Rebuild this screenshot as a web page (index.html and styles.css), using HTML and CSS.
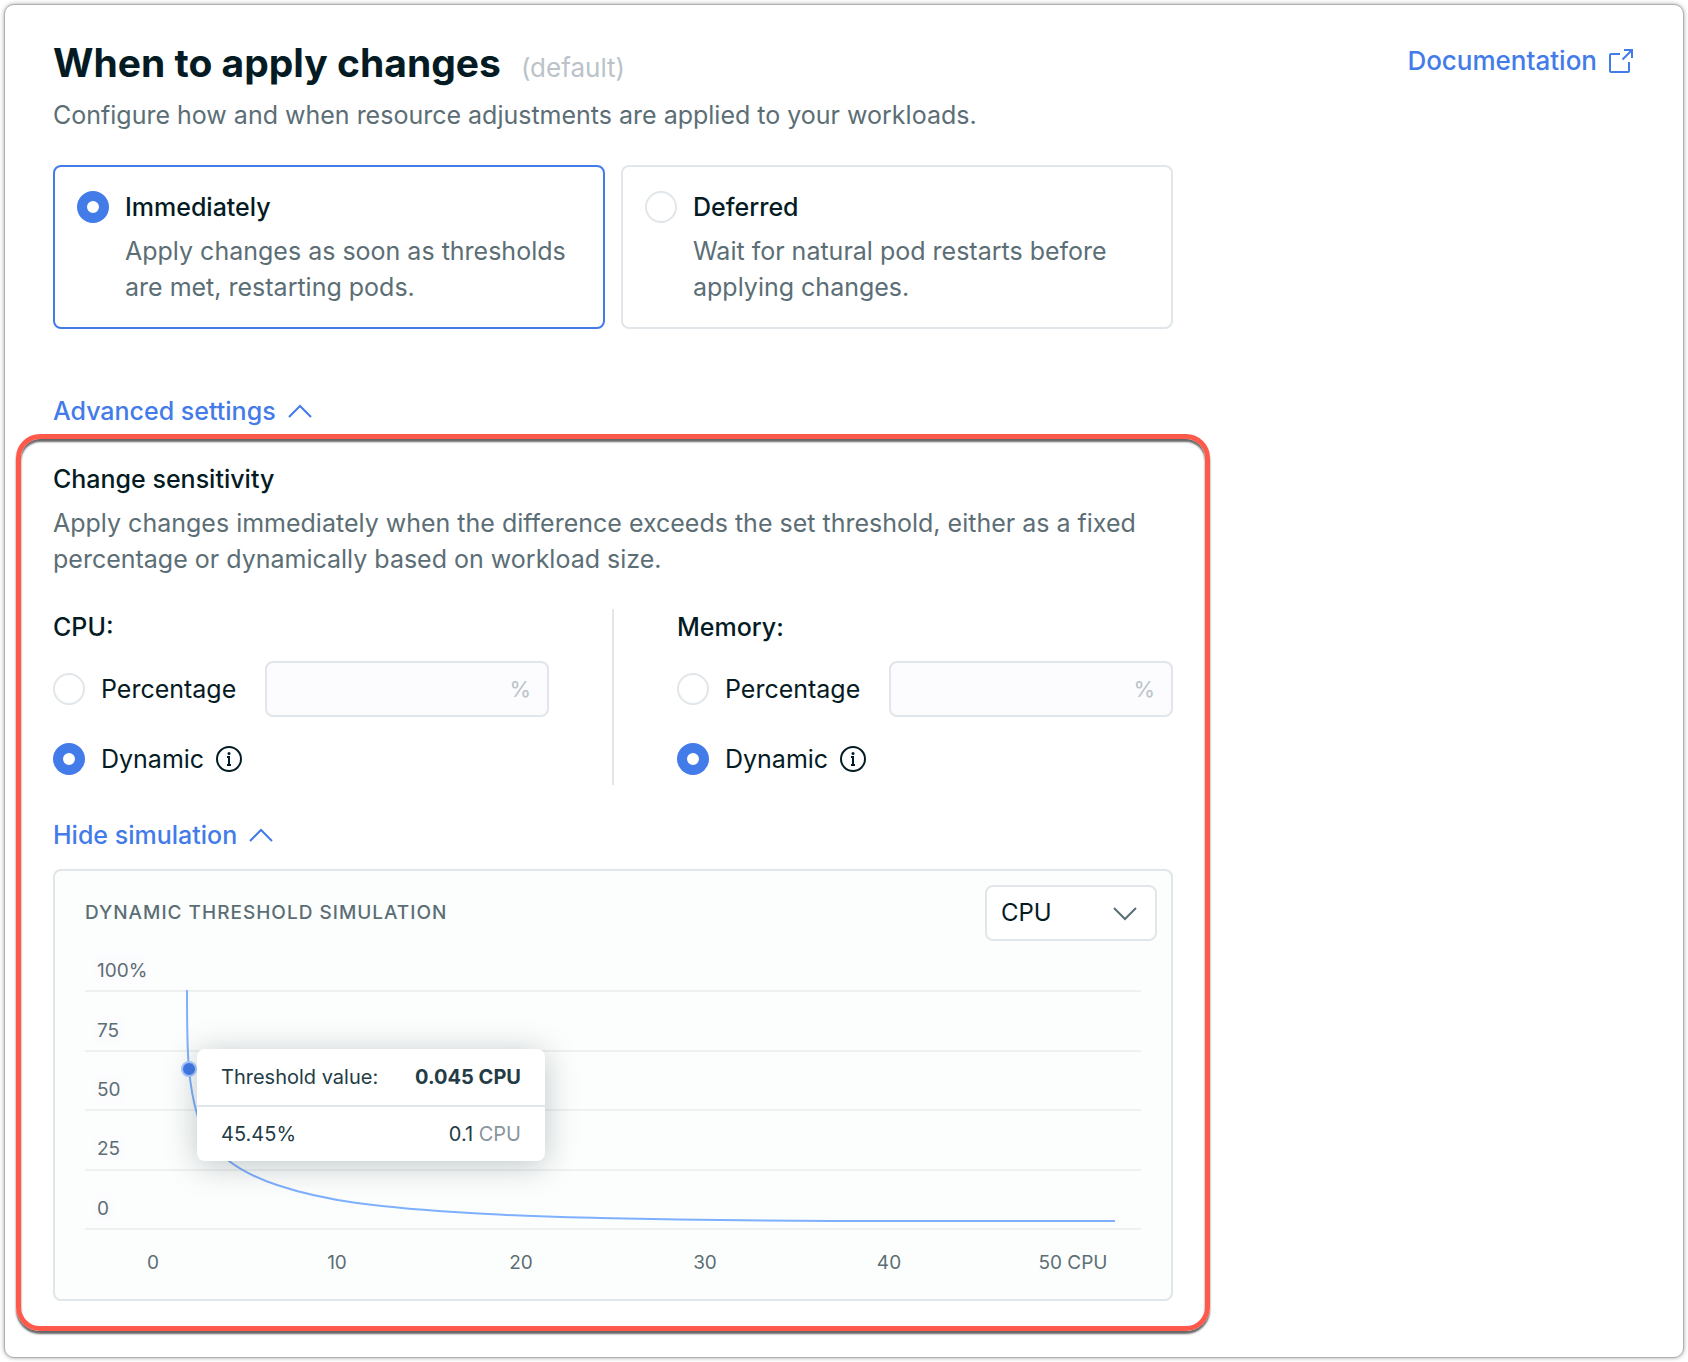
FILE: index.html
```html
<!DOCTYPE html>
<html lang="en">
<head>
    <meta charset="UTF-8">
    <meta name="viewport" content="width=device-width, initial-scale=1.0">
    <title>When to apply changes</title>
    <link rel="stylesheet" href="styles.css">
</head>
<body>
<main class="card">
    <header class="card-header">
        <div>
            <div class="title-row">
                <h1>When to apply changes</h1>
                <span class="title-note">(default)</span>
            </div>
            <p class="text">Configure how and when resource adjustments are applied to your workloads.</p>
        </div>
        <a class="doc-link" href="#documentation">
            Documentation
            <svg width="24" height="24" viewBox="0 0 24 24" fill="none" stroke="currentColor" stroke-width="2">
                <path d="M11 5H2a1 1 0 0 0-1 1v16a1 1 0 0 0 1 1h17a1 1 0 0 0 1-1v-9"/>
                <path d="M13.500 10.500L23 1M15 1h8v8"/>
            </svg>
        </a>
    </header>

    <div class="column">
        <div class="choices">
            <label class="choice selected" for="apply-now">
                <input class="radio" type="radio" id="apply-now" name="apply" checked>
                <span class="choice-body">
                    <span class="label-strong">Immediately</span>
                    <span class="text">Apply changes as soon as thresholds are met, restarting pods.</span>
                </span>
            </label>
            <label class="choice" for="apply-later">
                <input class="radio" type="radio" id="apply-later" name="apply">
                <span class="choice-body">
                    <span class="label-strong">Deferred</span>
                    <span class="text">Wait for natural pod restarts before applying changes.</span>
                </span>
            </label>
        </div>

        <button class="toggle" type="button">
            Advanced settings
            <svg width="24" height="14" viewBox="0 0 24 14" fill="none" stroke="currentColor" stroke-width="2">
                <path d="M1 13L12 2l11 11"/>
            </svg>
        </button>

        <section class="highlight">
            <h2 class="label-strong">Change sensitivity</h2>
            <p class="text">Apply changes immediately when the difference exceeds the set threshold, either as a fixed percentage or dynamically based on workload size.</p>

            <div class="resources">
                <div class="resource">
                    <h3 class="label-strong">CPU:</h3>
                    <div class="option-row">
                        <input class="radio" type="radio" id="cpu-percentage" name="cpu">
                        <label for="cpu-percentage">Percentage</label>
                        <div class="percent-field">
                            <input type="text" aria-label="CPU percentage" disabled>
                            <span>%</span>
                        </div>
                    </div>
                    <div class="option-row dynamic">
                        <input class="radio" type="radio" id="cpu-dynamic" name="cpu" checked>
                        <label for="cpu-dynamic">Dynamic</label>
                        <svg class="info" width="26" height="26" viewBox="0 0 26 26" fill="none" stroke="currentColor" stroke-width="2">
                            <circle cx="13" cy="13" r="12"/>
                            <path d="M11 11h2v8M11 19h4"/>
                            <circle cx="13" cy="7.500" r="1.500" fill="currentColor" stroke="none"/>
                        </svg>
                    </div>
                </div>
                <div class="divider"></div>
                <div class="resource">
                    <h3 class="label-strong">Memory:</h3>
                    <div class="option-row">
                        <input class="radio" type="radio" id="memory-percentage" name="memory">
                        <label for="memory-percentage">Percentage</label>
                        <div class="percent-field">
                            <input type="text" aria-label="Memory percentage" disabled>
                            <span>%</span>
                        </div>
                    </div>
                    <div class="option-row dynamic">
                        <input class="radio" type="radio" id="memory-dynamic" name="memory" checked>
                        <label for="memory-dynamic">Dynamic</label>
                        <svg class="info" width="26" height="26" viewBox="0 0 26 26" fill="none" stroke="currentColor" stroke-width="2">
                            <circle cx="13" cy="13" r="12"/>
                            <path d="M11 11h2v8M11 19h4"/>
                            <circle cx="13" cy="7.500" r="1.500" fill="currentColor" stroke="none"/>
                        </svg>
                    </div>
                </div>
            </div>

            <button class="toggle" type="button">
                Hide simulation
                <svg width="24" height="14" viewBox="0 0 24 14" fill="none" stroke="currentColor" stroke-width="2">
                    <path d="M1 13L12 2l11 11"/>
                </svg>
            </button>

            <div class="simulation">
                <div class="simulation-header">
                    <h3>Dynamic threshold simulation</h3>
                    <div class="select-wrap">
                        <select aria-label="Resource">
                            <option>CPU</option>
                            <option>Memory</option>
                        </select>
                        <svg width="24" height="14" viewBox="0 0 24 14" fill="none" stroke="currentColor" stroke-width="2">
                            <path d="M1 1l11 11L23 1"/>
                        </svg>
                    </div>
                </div>

                <div class="chart">
                    <svg class="plot" viewBox="0 0 1056 330">
                        <g class="chips">
                            <rect x="9" y="7" width="54" height="27" rx="4"/>
                            <rect x="9" y="67" width="31" height="27" rx="4"/>
                            <rect x="9" y="126" width="31" height="27" rx="4"/>
                            <rect x="9" y="185" width="31" height="27" rx="4"/>
                            <rect x="9" y="245" width="20" height="27" rx="4"/>
                        </g>
                        <path class="gridlines" d="M0 42h1056M0 102h1056M0 161h1056M0 221h1056M0 280h1056"/>
                        <g class="axis">
                            <text x="12" y="28">100%</text>
                            <text x="12" y="88">75</text>
                            <text x="12" y="147">50</text>
                            <text x="12" y="206">25</text>
                            <text x="12" y="266">0</text>
                        </g>
                        <g class="axis axis-x">
                            <text x="68" y="320">0</text>
                            <text x="252" y="320">10</text>
                            <text x="436" y="320">20</text>
                            <text x="620" y="320">30</text>
                            <text x="804" y="320">40</text>
                            <text x="988" y="320">50 CPU</text>
                        </g>
                        <path class="curve" d="M102 41C102 80 102 100 104 120C106 142 108 151 112 165C118 187 130 201 144 212C157 222 174 230 192 236C216 244 243 250 272 254C310 259 350 262 385 264C430 267 475 268 515 269C640 272 740 272 1030 272"/>
                        <circle class="dot" cx="104" cy="120" r="7"/>
                    </svg>

                    <div class="tooltip">
                        <div class="tooltip-row">
                            <span>Threshold value:</span>
                            <strong>0.045 CPU</strong>
                        </div>
                        <div class="tooltip-row">
                            <span>45.45%</span>
                            <span>0.1 <span class="unit">CPU</span></span>
                        </div>
                    </div>
                </div>
            </div>
        </section>
    </div>
</main>
</body>
</html>
```
FILE: styles.css
```css
* {
    box-sizing: border-box;
}

body {
    margin: 0;
    font-family: Inter, "Open Sans", sans-serif;
    font-size: 25px;
    line-height: 36px;
    color: #041b24;
    background-color: #fff;
}

h1, h2, h3, p {
    margin: 0;
}

.card {
    margin: 4px;
    padding: 34px 50px 26px 48px;
    border: 1px solid #b0b0b0;
    border-radius: 10px;
    background-color: #fff;
    box-shadow: 0 0 4px rgba(0, 0, 0, 0.35);
}

.card-header {
    display: flex;
    justify-content: space-between;
    align-items: flex-start;
}

.title-row {
    display: flex;
    align-items: baseline;
    gap: 20px;
    margin-bottom: 10px;
}

h1 {
    font-size: 39px;
    line-height: 48px;
    font-weight: 700;
}

.title-note {
    font-size: 26px;
    color: #b9c3c9;
}

.text {
    color: #5c6e75;
}

.label-strong {
    font-size: 25px;
    font-weight: 500;
}

.doc-link {
    display: flex;
    align-items: center;
    gap: 12px;
    margin-top: 4px;
    color: #437be9;
    font-size: 26px;
    font-weight: 500;
    text-decoration: none;
}

.column {
    max-width: 1120px;
}

/* Apply mode */
.choices {
    display: grid;
    grid-template-columns: 1fr 1fr;
    gap: 16px;
    margin: 32px 0 64px;
}

.choice {
    display: flex;
    align-items: flex-start;
    gap: 16px;
    padding: 22px;
    border: 2px solid #e1e6ea;
    border-radius: 8px;
    cursor: pointer;
}

.choice.selected {
    border-color: #437be9;
}

.choice .radio {
    margin-top: 2px;
}

.choice-body {
    display: flex;
    flex-direction: column;
    gap: 8px;
}

.radio {
    appearance: none;
    flex: none;
    width: 32px;
    height: 32px;
    margin: 0;
    border: 2px solid #e1e6ea;
    border-radius: 50%;
    background-color: #fff;
}

.radio:checked {
    border: 10px solid #437be9;
}

.toggle {
    display: flex;
    align-items: center;
    gap: 12px;
    padding: 0;
    border: none;
    background: none;
    color: #437be9;
    font: inherit;
    font-weight: 500;
    cursor: pointer;
}

/* Advanced settings */
.highlight {
    margin: 5px -37px 0;
    padding: 22px 32px 25px;
    border: 5px solid #ff594c;
    border-radius: 24px;
    box-shadow: 0 3px 2px rgba(0, 0, 0, 0.6), inset 0 3px 2px rgba(0, 0, 0, 0.6);
}

.highlight h2 {
    margin-bottom: 8px;
}

.resources {
    display: grid;
    grid-template-columns: 1fr 2px 1fr;
    gap: 63px;
    margin: 32px 0;
}

.divider {
    background-color: #e1e6ea;
}

.resource {
    padding-bottom: 8px;
}

.option-row {
    display: flex;
    align-items: center;
    gap: 16px;
    margin-top: 16px;
}

.option-row.dynamic {
    margin-top: 24px;
}

.info {
    margin-left: -4px;
}

.percent-field {
    display: flex;
    align-items: center;
    width: 284px;
    height: 56px;
    margin-left: auto;
    padding: 0 16px;
    border: 2px solid #e1e6ea;
    border-radius: 8px;
    background-color: #fcfcfe;
    color: #b9c3c9;
    font-size: 22px;
}

.percent-field input {
    flex: 1;
    min-width: 0;
    border: none;
    background: none;
    font: inherit;
}

/* Simulation */
.simulation {
    margin-top: 16px;
    padding: 14px 0 20px;
    border: 2px solid #e1e6ea;
    border-radius: 8px;
    background-color: #fcfefd;
}

.simulation-header {
    display: flex;
    align-items: center;
    justify-content: space-between;
    padding: 0 14px 0 30px;
    margin-bottom: 8px;
}

.simulation-header h3 {
    color: #5c6e75;
    font-size: 19px;
    font-weight: 500;
    letter-spacing: 1px;
    text-transform: uppercase;
}

.select-wrap {
    position: relative;
    color: #5c6e75;
}

.select-wrap select {
    appearance: none;
    display: block;
    width: 172px;
    height: 56px;
    padding: 0 14px;
    border: 2px solid #e1e6ea;
    border-radius: 8px;
    background-color: #fff;
    color: #041b24;
    font: inherit;
    font-size: 24px;
}

.select-wrap svg {
    position: absolute;
    top: 22px;
    right: 20px;
    pointer-events: none;
}

.chart {
    position: relative;
    margin: 0 30px;
}

.plot {
    display: block;
    width: 100%;
}

.chips {
    fill: #fcfbfe;
}

.gridlines {
    stroke: #eff1f1;
    stroke-width: 2;
}

.axis {
    fill: #5c6e75;
    font-size: 19px;
}

.axis-x {
    text-anchor: middle;
}

.curve {
    fill: none;
    stroke: #7fb0ff;
    stroke-width: 2;
}

.dot {
    fill: #437be9;
    stroke: #a9c8ff;
    stroke-width: 2;
}

.tooltip {
    position: absolute;
    top: 100px;
    left: 112px;
    width: 348px;
    border-radius: 8px;
    background-color: #fff;
    box-shadow: 0 4px 32px rgba(4, 27, 36, 0.25);
    color: #233c46;
    font-size: 20px;
}

.tooltip-row {
    display: flex;
    justify-content: space-between;
    padding: 10px 24px;
}

.tooltip-row + .tooltip-row {
    padding: 9px 24px;
    border-top: 2px solid #e1e6ea;
}

.unit {
    color: #87959c;
}
```
